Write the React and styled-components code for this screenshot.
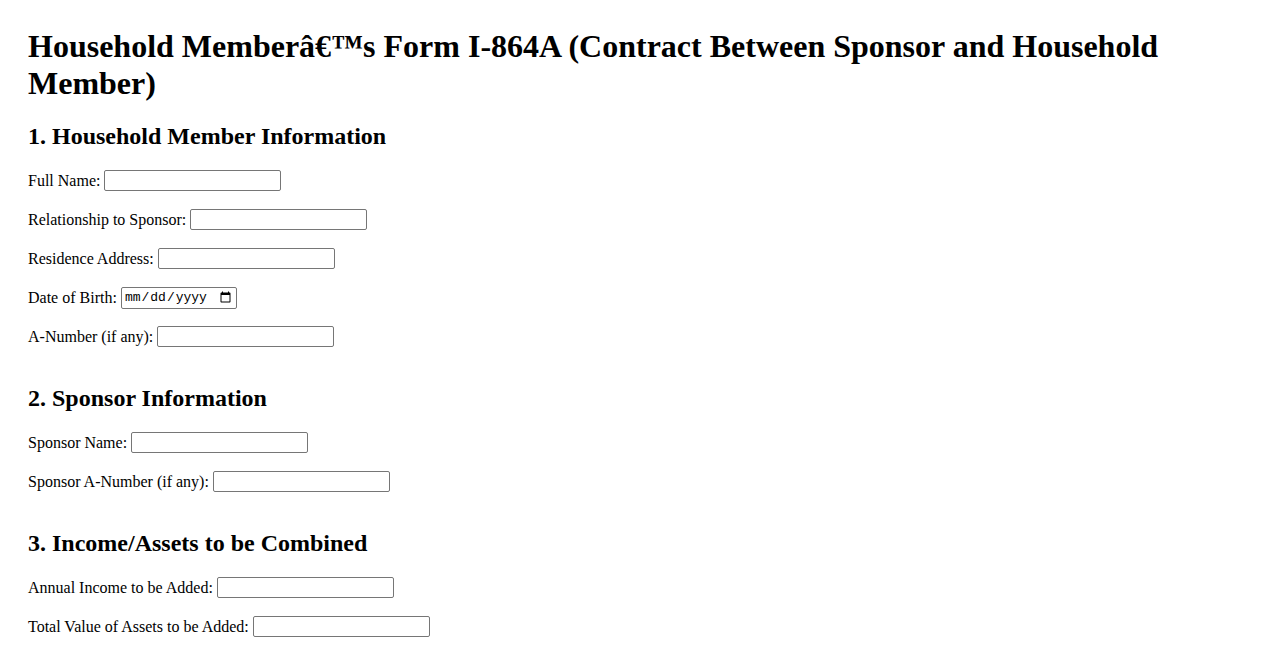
import React from "react"
import styled, { createGlobalStyle } from "styled-components"

const GlobalStyle = createGlobalStyle`
  body {
    margin: 8px;
    background: #fff;
    color: #000;
    font-family: "Liberation Serif", "Times New Roman", serif;
    font-size: 16px;
  }
`

const sections = [
  {
    title: "1. Household Member Information",
    fields: [
      { label: "Full Name:" },
      { label: "Relationship to Sponsor:" },
      { label: "Residence Address:" },
      { label: "Date of Birth:", type: "date" },
      { label: "A-Number (if any):" },
    ],
  },
  {
    title: "2. Sponsor Information",
    fields: [
      { label: "Sponsor Name:" },
      { label: "Sponsor A-Number (if any):" },
    ],
  },
  {
    title: "3. Income/Assets to be Combined",
    fields: [
      { label: "Annual Income to be Added:" },
      { label: "Total Value of Assets to be Added:" },
    ],
  },
]

const App = () => (
  <Page>
    <GlobalStyle />
    <Title>Household Memberâ€™s Form I-864A (Contract Between Sponsor and Household Member)</Title>
    <form>
      {sections.map((s) => (
        <Section key={s.title}>
          <Heading>{s.title}</Heading>
          {s.fields.map((f) => (
            <Row key={f.label}>
              <label>{f.label}</label>
              {f.type === "date" ? <DateInput type="date" /> : <TextInput type="text" />}
            </Row>
          ))}
        </Section>
      ))}
    </form>
  </Page>
)

const Page = styled.div`
  padding: 20px;
`

const Title = styled.h1`
  font-size: 32px;
  font-weight: bold;
  margin: 0 0 21px;
`

const Section = styled.section`
  margin-bottom: 37px;
`

const Heading = styled.h2`
  font-size: 24px;
  font-weight: bold;
  margin: 20px 0 19px;
`

const Row = styled.p`
  display: flex;
  align-items: center;
  gap: 4px;
  height: 23px;
  margin: 16px 0;
  font-size: 16px;
`

const TextInput = styled.input`
  box-sizing: border-box;
  width: 177px;
  height: 21px;
  margin: 0;
  padding: 1px 2px;
  border: 1px solid #767676;
  border-radius: 2px;
  font-family: "Liberation Sans", Arial, sans-serif;
  font-size: 13.33px;
`

const DateInput = styled(TextInput)`
  width: 116px;
  height: 22px;
  font-family: "Liberation Mono", monospace;
  font-size: 13px;
`

export default App
